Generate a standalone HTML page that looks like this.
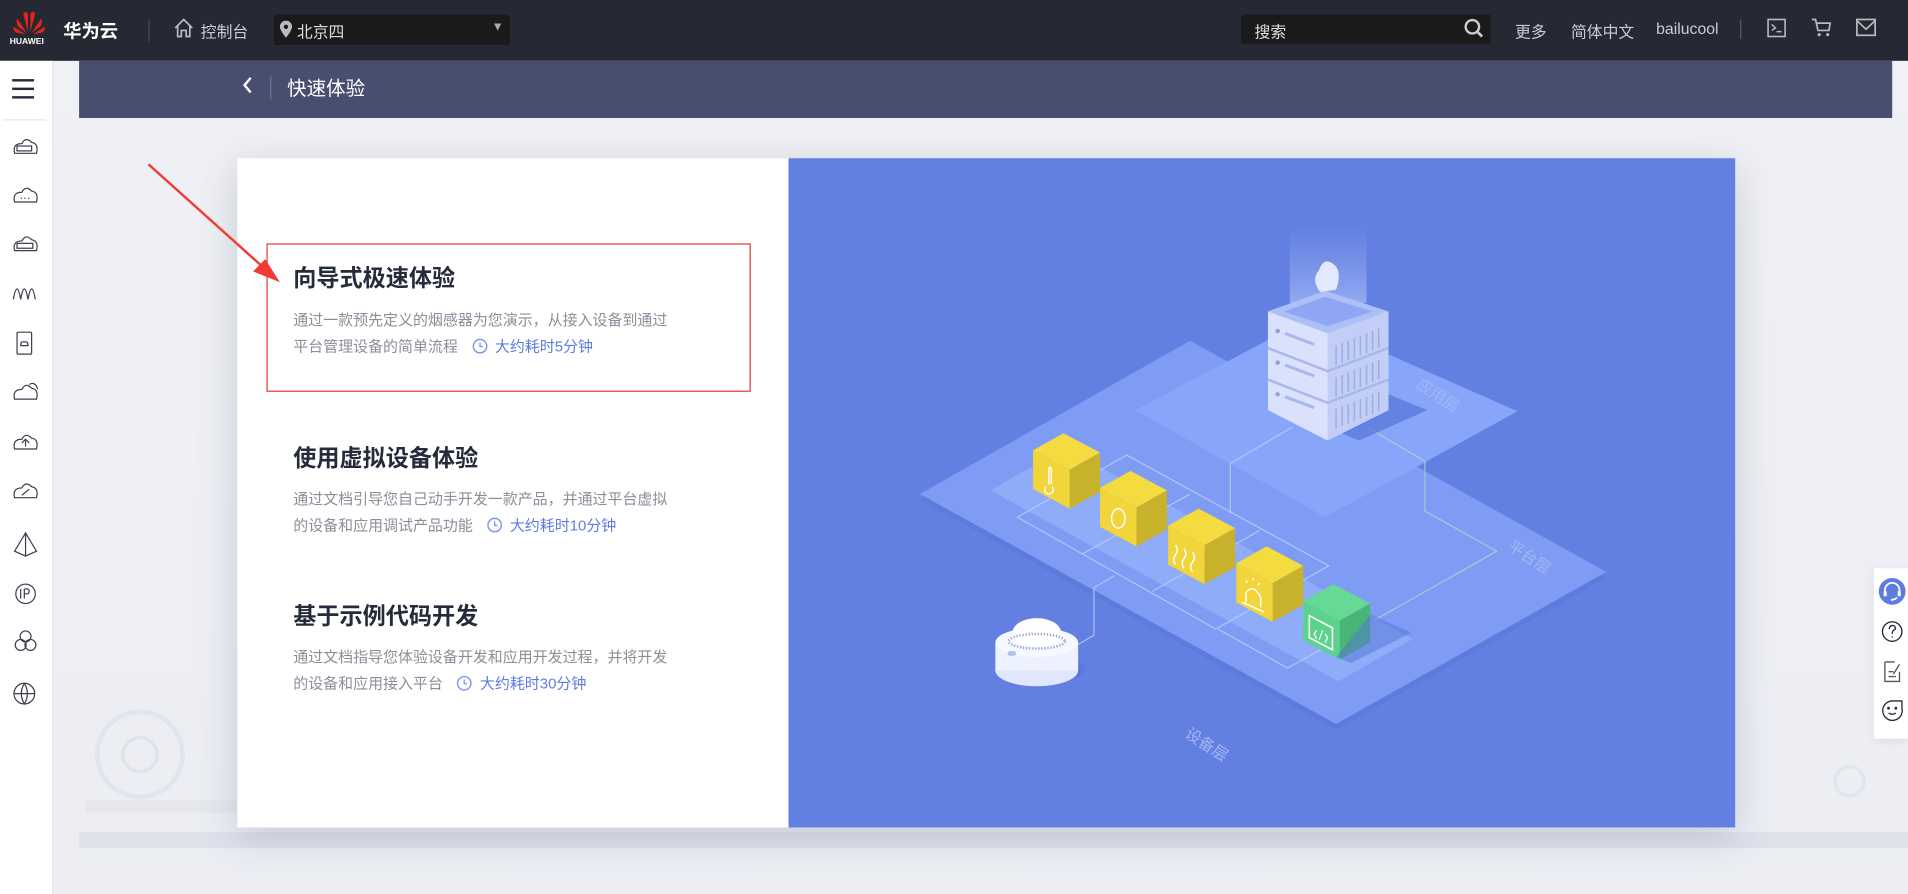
<!DOCTYPE html>
<html><head><meta charset="utf-8">
<style>
html,body{margin:0;padding:0;width:1908px;height:894px;overflow:hidden;background:#eef0f5;}
#w{position:absolute;left:0;top:0;width:1568px;height:735px;overflow:hidden;transform:scale(1.21684);transform-origin:0 0;font-family:"Liberation Sans","Noto Sans CJK SC",sans-serif;background:linear-gradient(#f0f1f5,#eceef4);}
.a{position:absolute;}
#hd{left:0;top:0;width:1568px;height:50px;background:#262933;}
#hd .t{color:#c9ccd3;font-size:13px;}
#sb{left:0;top:50px;width:43px;height:685px;background:#fff;border-right:1px solid #dfe1e6;}
#sub{left:65px;top:50px;width:1490px;height:47px;background:#474e6f;}
#card{left:195px;top:130px;width:1231px;height:550px;background:#fff;box-shadow:0 8px 30px rgba(80,90,120,.25);}
h3{margin:0;font-size:19px;font-weight:bold;color:#252b3a;position:absolute;left:46px;}
.d{position:absolute;left:46px;width:360px;font-size:12.3px;line-height:21.5px;color:#8a8e99;white-space:nowrap;}
.d .l{color:#5e7ce0;margin-left:8px;}
.ck{display:inline-block;width:13px;height:13px;vertical-align:-2px;margin-right:6px;}
</style></head><body><div id="w">
<div class="a" style="left:65px;top:684px;width:1503px;height:13px;background:#dfe2eb"></div>
<div class="a" id="hd">
 <svg class="a" style="left:10px;top:8px" width="28" height="22" viewBox="0 0 28 22">
  <g fill="#e1251b"><path d="M13 18 L9 3 Q12 0 13 4Z"/><path d="M15 18 L19 3 Q16 0 15 4Z"/><path d="M12 19 L4 7 Q3 11 5 14Z"/><path d="M16 19 L24 7 Q25 11 23 14Z"/><path d="M11 20 L1 14 Q1 18 4 19Z"/><path d="M17 20 L27 14 Q27 18 24 19Z"/></g></svg>
 <div class="a" style="left:8px;top:31px;color:#fff;font-size:7px;font-weight:bold">HUAWEI</div>
 <div class="a" style="left:52px;top:15px;color:#fff;font-size:15px;font-weight:bold">华为云</div>
 <div class="a" style="left:122px;top:16px;width:1px;height:18px;background:#4a4d56"></div>
 <svg class="a" style="left:142px;top:14px" width="18" height="18" viewBox="0 0 18 18"><path d="M2 9 L9 2 L16 9 M4 7 V16 H7 V11 H11 V16 H14 V7" fill="none" stroke="#b8bbc2" stroke-width="1.4"/></svg>
 <div class="a t" style="left:165px;top:16px">控制台</div>
 <div class="a" style="left:225px;top:12px;width:194px;height:25px;background:#1a1a1a;border-radius:2px"></div>
 <svg class="a" style="left:230px;top:17px" width="10" height="14" viewBox="0 0 10 14"><path d="M5 0 A5 5 0 0 1 10 5 C10 8 5 14 5 14 C5 14 0 8 0 5 A5 5 0 0 1 5 0Z" fill="#b8bbc2"/><circle cx="5" cy="5" r="1.8" fill="#1a1a1a"/></svg>
 <div class="a t" style="left:244px;top:16px;color:#ddd">北京四</div>
 <div class="a" style="left:404px;top:17px;color:#aaa;font-size:10px">▼</div>
 <div class="a" style="left:1020px;top:12px;width:205px;height:24px;background:#1a1a1a;border-radius:2px"></div>
 <div class="a t" style="left:1031px;top:16px;color:#ddd">搜索</div>
 <svg class="a" style="left:1203px;top:15px" width="17" height="17" viewBox="0 0 17 17"><circle cx="7" cy="7" r="5.5" fill="none" stroke="#c8cbd0" stroke-width="2"/><path d="M11 11 L15 15" stroke="#c8cbd0" stroke-width="2.2"/></svg>
 <div class="a t" style="left:1245px;top:16px">更多</div>
 <div class="a t" style="left:1291px;top:16px">简体中文</div>
 <div class="a t" style="left:1361px;top:16px">bailucool</div>
 <div class="a" style="left:1430px;top:16px;width:1px;height:16px;background:#5a5d66"></div>
 <svg class="a" style="left:1452px;top:15px" width="16" height="16" viewBox="0 0 16 16"><rect x="1" y="1" width="14" height="14" fill="none" stroke="#b8bbc2" stroke-width="1.3"/><path d="M4 5 L7 8 L4 10 M8 11 H12" stroke="#b8bbc2" stroke-width="1.2" fill="none"/></svg>
 <svg class="a" style="left:1488px;top:14px" width="18" height="17" viewBox="0 0 18 17"><path d="M1 2 H4 L6 11 H15 L16 5 H5" fill="none" stroke="#b8bbc2" stroke-width="1.4"/><circle cx="7" cy="14.5" r="1.3" fill="#b8bbc2"/><circle cx="14" cy="14.5" r="1.3" fill="#b8bbc2"/></svg>
 <svg class="a" style="left:1525px;top:15px" width="17" height="15" viewBox="0 0 17 15"><rect x="1" y="1" width="15" height="13" fill="none" stroke="#b8bbc2" stroke-width="1.4"/><path d="M1 2 L8.5 9 L16 2" fill="none" stroke="#b8bbc2" stroke-width="1.4"/></svg>
</div>
<div class="a" id="sb">
 <div class="a" style="left:10px;top:15px;width:18px;height:2px;background:#252b3a;box-shadow:0 7px 0 #252b3a,0 14px 0 #252b3a"></div>
 <div class="a" style="left:2px;top:48px;width:36px;height:1px;background:#e4e6ea"></div>
 <svg class="a" style="left:8px;top:58px" width="26" height="530" viewBox="0 0 26 530" fill="none" stroke="#3a3f4c" stroke-width="1">
  <path d="M4 18 Q2 10 10 10 Q13 4 18 9 Q24 10 22 18Z"/><rect x="6" y="12" width="12" height="4"/>
  <path d="M4 58 Q2 50 10 50 Q13 44 18 49 Q24 50 22 58Z"/><path d="M9 55h1M12 55h1M15 55h1"/>
  <path d="M4 98 Q2 90 10 90 Q13 84 18 89 Q24 90 22 98Z"/><rect x="6" y="92" width="13" height="4"/>
  <path d="M3 138 Q6 121 9 138 Q12 121 15 138 Q18 121 21 138"/>
  <rect x="6" y="165" width="12" height="18" rx="1"/><path d="M9 176 Q9 172 12 173 Q15 172 15 176Z"/>
  <path d="M4 220 Q2 212 10 212 Q13 206 18 211 Q24 212 22 220Z M16 208 Q21 205 23 212"/>
  <path d="M4 261 Q2 253 10 253 Q13 247 18 252 Q24 253 22 261Z M13 259 V254 M10 256 L13 253 L16 256"/>
  <path d="M4 301 Q2 293 10 293 Q13 287 18 292 Q24 293 22 301Z M10 299 L16 294"/>
  <path d="M13 330 L4 345 L13 349 L22 345Z M13 330 V349"/>
  <circle cx="13" cy="380" r="8"/><path d="M9 376 V384 M12 376 V384 M12 376 H15 Q17 378 15 380 H12"/>
  <circle cx="13" cy="415" r="4.5"/><circle cx="9" cy="422" r="4.5"/><circle cx="17" cy="422" r="4.5"/>
  <circle cx="12" cy="462" r="8.5"/><path d="M3.5 462 H20.5 M12 453.5 Q7 462 12 470.5 Q17 462 12 453.5"/>
 </svg>
</div>
<div class="a" id="sub">
 <svg class="a" style="left:133px;top:12px" width="10" height="16" viewBox="0 0 10 16"><path d="M8 2 L3 8 L8 14" fill="none" stroke="#fff" stroke-width="2"/></svg>
 <div class="a" style="left:157px;top:12px;width:1px;height:20px;background:#6b7190"></div>
 <div class="a" style="left:171px;top:9px;color:#fff;font-size:16px">快速体验</div>
</div>
<svg class="a" style="left:70px;top:570px" width="1500" height="115" viewBox="0 0 1500 115">
 <circle cx="45" cy="50" r="35" fill="none" stroke="#e2e5ec" stroke-width="4"/><circle cx="45" cy="50" r="14" fill="none" stroke="#e0e3ea" stroke-width="3"/>
 <rect x="0" y="88" width="130" height="10" fill="#e6e8ee"/>
 <circle cx="1450" cy="72" r="12" fill="none" stroke="#e2e5ec" stroke-width="3"/>
</svg>
<div class="a" id="card">
 <div class="a" style="left:453px;top:0;width:778px;height:550px;background:#6280e2"></div>
 <div class="a" style="left:24px;top:70px;width:396px;height:120px;border:1px solid #e53935"></div>
 <h3 style="top:84px">向导式极速体验</h3>
 <div class="d" style="top:123px">通过一款预先定义的烟感器为您演示，从接入设备到通过<br>平台管理设备的简单流程 <span class="l"><svg class="ck" viewBox="0 0 13 13"><circle cx="6.5" cy="6.5" r="5.5" fill="none" stroke="#7f97ea" stroke-width="1.2"/><path d="M6.5 3.5 V6.8 H8.8" fill="none" stroke="#7f97ea" stroke-width="1.1"/></svg>大约耗时5分钟</span></div>
 <h3 style="top:232px">使用虚拟设备体验</h3>
 <div class="d" style="top:270px">通过文档引导您自己动手开发一款产品，并通过平台虚拟<br>的设备和应用调试产品功能 <span class="l"><svg class="ck" viewBox="0 0 13 13"><circle cx="6.5" cy="6.5" r="5.5" fill="none" stroke="#7f97ea" stroke-width="1.2"/><path d="M6.5 3.5 V6.8 H8.8" fill="none" stroke="#7f97ea" stroke-width="1.1"/></svg>大约耗时10分钟</span></div>
 <h3 style="top:362px">基于示例代码开发</h3>
 <div class="d" style="top:400px">通过文档指导您体验设备开发和应用开发过程，并将开发<br>的设备和应用接入平台 <span class="l"><svg class="ck" viewBox="0 0 13 13"><circle cx="6.5" cy="6.5" r="5.5" fill="none" stroke="#7f97ea" stroke-width="1.2"/><path d="M6.5 3.5 V6.8 H8.8" fill="none" stroke="#7f97ea" stroke-width="1.1"/></svg>大约耗时30分钟</span></div>
</div>
<svg class="a" style="left:648px;top:130px" width="778" height="550" viewBox="648 130 778 550">
 <defs><linearGradient id="gl" x1="0" y1="0" x2="0" y2="1"><stop offset="0" stop-color="#9fb3f5" stop-opacity="0"/><stop offset="1" stop-color="#b4c4f8" stop-opacity=".6"/></linearGradient></defs>
 <polygon points="756,411 978,285 1320,475 1098,600" fill="#5a78da" opacity=".6"/>
 <polygon points="756,406 978,280 1320,470 1098,595" fill="#7f9cf5"/>
 <polygon points="814,403 875,368 1161,525 1100,560" fill="#8eacf8"/>
 <polygon points="933,337 1075,262 1247,338 1089,425" fill="#88a6f9"/>
 <g fill="none" stroke="#bccdf7" stroke-width=".8">
  <path d="M836 425 L926 374 L1092 465 L999 517Z"/><path d="M890 455 L978 406 M947 486 L1035 436"/>
  <path d="M916 473 L899 483 V522 L882 532"/>
  <path d="M1062 351 L1011 381 V422"/>
  <path d="M1001 517 L1058 549 L1096 528"/>
 </g>
 <path d="M1125 352 L1171 379 V420 L1230 453 L1129 510" fill="none" stroke="#a8d8c8" stroke-width=".8"/>
 <polygon points="1141,324 1173,337 1117,362 1100,355" fill="#5473d8" opacity=".7"/>
 <rect x="1060" y="185" width="63" height="64" fill="url(#gl)"/>
 <path d="M1042 256 L1089 239 L1141 256 V337 L1091 362 L1042 337Z" fill="#d9e1fc"/>
 <path d="M1091 274 L1141 256 V337 L1091 362Z" fill="#c2cef6"/>
 <path d="M1042 256 L1089 239 L1141 256 L1091 274Z" fill="#aebff8"/>
 <path d="M1055 256 L1089 244 L1128 256 L1091 268Z" fill="#8fa6f2"/>
 <path d="M1042 286 L1091 305 L1141 286 M1042 312 L1091 331 L1141 312" stroke="#a9b8ec" stroke-width="2" fill="none"/>
 <g stroke="#9eaee4" stroke-width="1.3"><path d="M1098 284 V300 M1103 282 V298 M1108 280 V296 M1113 278 V294 M1118 276 V292 M1123 274 V290 M1128 272 V288 M1133 270 V286"/><path d="M1098 310 V326 M1103 308 V324 M1108 306 V322 M1113 304 V320 M1118 302 V318 M1123 300 V316 M1128 298 V314 M1133 296 V312"/><path d="M1098 336 V352 M1103 334 V350 M1108 332 V348 M1113 330 V346 M1118 328 V344 M1123 326 V342 M1128 324 V340 M1133 322 V338"/></g>
 <g fill="#8c9fe0"><circle cx="1050" cy="272" r="1.8"/><circle cx="1050" cy="298" r="1.8"/><circle cx="1050" cy="324" r="1.8"/></g>
 <path d="M1056 274 L1080 283 M1056 300 L1080 309 M1056 326 L1080 335" stroke="#a9b8ec" stroke-width="2.5"/>
 <path d="M1085 240 Q1077 230 1084 222 Q1088 210 1097 218 Q1103 224 1098 238Z" fill="#e3e9fd"/>
 <g transform="translate(849,356)"><polygon points="0,14 25,0 55,16 30,30" fill="#f4db3f"/><polygon points="0,14 30,30 30,62 0,46" fill="#f2d43b"/><polygon points="30,30 55,16 55,48 30,62" fill="#c9b22b"/><path d="M13 28 V42 M10.5 44 a3.5 3.5 0 1 0 5 0 M13 28 q2 0 2 2 V42" stroke="#fff" stroke-width="1.2" fill="none"/></g>
 <g transform="translate(904,387)"><polygon points="0,14 25,0 55,16 30,30" fill="#f4db3f"/><polygon points="0,14 30,30 30,62 0,46" fill="#f2d43b"/><polygon points="30,30 55,16 55,48 30,62" fill="#c9b22b"/><ellipse cx="15" cy="39" rx="5.5" ry="8" stroke="#fff" stroke-width="1.2" fill="none"/></g>
 <g transform="translate(960,418)"><polygon points="0,14 25,0 55,16 30,30" fill="#f4db3f"/><polygon points="0,14 30,30 30,62 0,46" fill="#f2d43b"/><polygon points="30,30 55,16 55,48 30,62" fill="#c9b22b"/><path d="M6 30 q3 4 0 8 q-3 4 0 8 M13 33 q3 4 0 8 q-3 4 0 8 M20 36 q3 4 0 8 q-3 4 0 8" stroke="#fff" stroke-width="1.2" fill="none"/></g>
 <g transform="translate(1016,449)"><polygon points="0,14 25,0 55,16 30,30" fill="#f4db3f"/><polygon points="0,14 30,30 30,62 0,46" fill="#f2d43b"/><polygon points="30,30 55,16 55,48 30,62" fill="#c9b22b"/><path d="M8 46 V38 Q14 30 20 42 V50 M5 46 L23 54 M8 28 l1 2 M14 26 v2 M19 30 l-1 2" stroke="#fff" stroke-width="1.2" fill="none"/></g>
 <g transform="translate(1071,480)"><polygon points="0,14 25,0 55,16 30,30" fill="#66d996"/><polygon points="0,14 30,30 30,62 0,46" fill="#5bd38c"/><polygon points="30,30 55,16 55,48 30,62" fill="#48b574"/><path d="M5 26 L24 36 V54 L5 44Z" stroke="#fff" stroke-width="1.3" fill="none"/><path d="M11 38 L9 41 L11 45 M18 41 L20 44 L18 48 M13 46 L16 38" stroke="#fff" stroke-width="1" fill="none"/></g>
 <polygon points="1126,505 1160,520 1110,545 1098,540" fill="#5473d8" opacity=".5"/>
 <ellipse cx="858" cy="550" rx="33" ry="12" fill="#5473d8" opacity=".6"/>
 <ellipse cx="852" cy="551" rx="34" ry="13" fill="#dfe6fd"/>
 <rect x="818" y="528" width="68" height="23" fill="#eef2fe"/>
 <ellipse cx="852" cy="528" rx="34" ry="12" fill="#f6f8ff"/>
 <ellipse cx="852" cy="520" rx="20" ry="12" fill="#fff"/>
 <ellipse cx="852" cy="527" rx="23" ry="6" fill="none" stroke="#8f9dcc" stroke-width="2" stroke-dasharray="1 1.5"/>
 <rect x="828" y="535" width="7" height="4" rx="2" fill="#b6c2ee"/>
 <g font-family="Liberation Sans, Noto Sans CJK SC, sans-serif" font-size="13" fill="#a3b6f3">
  <text transform="translate(1163,318) rotate(33)">应用层</text>
  <text transform="translate(1238,451) rotate(33)">平台层</text>
  <text transform="translate(973,605) rotate(33)">设备层</text>
 </g>
</svg>
<svg class="a" style="left:110px;top:125px" width="135" height="120" viewBox="0 0 135 120"><path d="M12 10 L110 98" stroke="#f03a33" stroke-width="2"/><polygon points="120,107 98,98 108,88" fill="#f03a33"/></svg>
<div class="a" style="left:1540px;top:467px;width:28px;height:140px;background:#fff;box-shadow:0 2px 8px rgba(0,0,0,.08)"></div>
<svg class="a" style="left:1543px;top:474px" width="25" height="125" viewBox="0 0 25 125" fill="none" stroke="#252b3a" stroke-width="1.1">
 <circle cx="12" cy="12" r="11" fill="#5e7ce0" stroke="none"/><path d="M6 14 V11 A6 6 0 0 1 18 11 V14 M16 17 Q14 19 11 19" stroke="#fff" stroke-width="1.5"/><rect x="5" y="12" width="2.5" height="4" fill="#fff" stroke="none"/><rect x="16.5" y="12" width="2.5" height="4" fill="#fff" stroke="none"/>
 <circle cx="12" cy="45" r="8"/><path d="M9.5 43 Q10 40 12 40 Q15 40 14.5 43 Q12 44 12 47 M12 49 V50"/>
 <path d="M6 70 V86 H18 V78 M6 70 H14 M18 72 L13 80 M9 78 H13 M9 82 H15" stroke="#555"/>
 <path d="M12 102 a8 8 0 1 0 8 6 L20 102Z"/><circle cx="9" cy="108" r=".6"/><circle cx="15" cy="108" r=".6"/><path d="M9 112 Q12 114 15 112"/>
</svg>
</div></body></html>
